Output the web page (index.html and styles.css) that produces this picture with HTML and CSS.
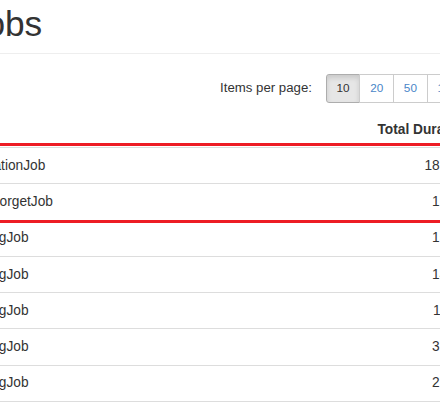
FILE: index.html
```html
<!DOCTYPE html>
<html lang="en">
<head>
<meta charset="utf-8">
<title>Succeeded Jobs</title>
<link rel="stylesheet" href="styles.css">
</head>
<body>
<div class="page">
  <h1 class="page-header">Succeeded Jobs</h1>
  <div class="toolbar">
    <button class="btn btn-sm" disabled>Requeue jobs</button>
    <div class="per-page">
      <span class="per-page-label">Items per page:</span>
      <div class="btn-group">
        <a class="btn btn-sm active">10</a>
        <a class="btn btn-sm">20</a>
        <a class="btn btn-sm">50</a>
        <a class="btn btn-sm">100</a>
        <a class="btn btn-sm">500</a>
        <a class="btn btn-sm">1000</a>
        <a class="btn btn-sm">5000</a>
      </div>
    </div>
  </div>
  <div class="table-wrap">
    <table class="table">
      <colgroup>
        <col class="c-check">
        <col class="c-id">
        <col class="c-job">
        <col class="c-dur">
        <col class="c-when">
      </colgroup>
      <thead>
        <tr>
          <th><input type="checkbox"></th>
          <th>Id</th>
          <th>Job</th>
          <th class="right">Total Duration</th>
          <th class="right">Succeeded</th>
        </tr>
      </thead>
      <tbody>
        <tr><td><input type="checkbox"></td><td>#1057</td><td>AuthorizationJob</td><td class="right">183 ms</td><td class="right">a minute ago</td></tr>
        <tr><td><input type="checkbox"></td><td>#1056</td><td>FireAndForgetJob</td><td class="right">12 ms</td><td class="right">a minute ago</td></tr>
        <tr><td><input type="checkbox"></td><td>#1055</td><td>PublishingJob</td><td class="right">15 ms</td><td class="right">2 minutes ago</td></tr>
        <tr><td><input type="checkbox"></td><td>#1054</td><td>PublishingJob</td><td class="right">14 ms</td><td class="right">3 minutes ago</td></tr>
        <tr><td><input type="checkbox"></td><td>#1053</td><td>PublishingJob</td><td class="right">11 ms</td><td class="right">4 minutes ago</td></tr>
        <tr><td><input type="checkbox"></td><td>#1052</td><td>PublishingJob</td><td class="right">31 ms</td><td class="right">5 minutes ago</td></tr>
        <tr><td><input type="checkbox"></td><td>#1051</td><td>PublishingJob</td><td class="right">27 ms</td><td class="right">6 minutes ago</td></tr>
        <tr><td><input type="checkbox"></td><td>#1050</td><td>PublishingJob</td><td class="right">19 ms</td><td class="right">7 minutes ago</td></tr>
        <tr><td><input type="checkbox"></td><td>#1049</td><td>PublishingJob</td><td class="right">16 ms</td><td class="right">8 minutes ago</td></tr>
        <tr><td><input type="checkbox"></td><td>#1048</td><td>PublishingJob</td><td class="right">13 ms</td><td class="right">9 minutes ago</td></tr>
      </tbody>
    </table>
    <div class="highlight"></div>
  </div>
</div>
</body>
</html>
```
FILE: styles.css
```css
html {
  zoom: 0.98;
}

* {
  box-sizing: border-box;
}

body {
  margin: 0;
  overflow: hidden;
  background: #fff;
  color: #333;
  font-family: "Liberation Sans", Arial, sans-serif;
  font-size: 14px;
  line-height: 20px;
}

.page {
  width: 832px;
  margin-left: -218px;
}

.page-header {
  margin: 5.5px 0 20px;
  padding-bottom: 9px;
  border-bottom: 1px solid #eee;
  font-size: 36px;
  line-height: 39.6px;
  font-weight: 500;
  text-indent: -5px;
}

.toolbar {
  display: flex;
  justify-content: space-between;
  align-items: center;
  height: 30px;
  margin-bottom: 9px;
}

.per-page {
  display: flex;
  align-items: center;
}

.per-page-label {
  margin-right: 14px;
  font-size: 13.5px;
}

.btn-group {
  display: flex;
}

.btn {
  display: inline-block;
  padding: 5px 10px;
  font-family: inherit;
  font-size: 12px;
  line-height: 18px;
  border: 1px solid #ccc;
  background: #fff;
  color: #4a86c8;
  text-decoration: none;
  border-radius: 3px;
}

.btn[disabled] {
  color: #333;
  opacity: 0.65;
}

.btn-group .btn {
  border-radius: 0;
}

.btn-group .btn + .btn {
  margin-left: -1px;
}

.btn-group .btn:first-child {
  border-radius: 3px 0 0 3px;
}

.btn-group .btn:last-child {
  border-radius: 0 3px 3px 0;
}

.btn.active {
  background: #e6e6e6;
  border-color: #adadad;
  color: #333;
  box-shadow: inset 0 3px 5px rgba(0, 0, 0, 0.125);
}

.table-wrap {
  position: relative;
}

.table {
  width: 100%;
  table-layout: fixed;
  border-collapse: separate;
  border-spacing: 0;
}

.c-check { width: 30px; }
.c-id { width: 122px; }
.c-job { width: 400px; }
.c-dur { width: 153px; }

.table th,
.table td {
  padding: 8px;
  line-height: 20px;
  text-align: left;
  white-space: nowrap;
  overflow: hidden;
}

.table th {
  font-weight: bold;
  vertical-align: bottom;
  border-bottom: 2px solid #ddd;
}

.table td {
  vertical-align: top;
  border-top: 1px solid #ddd;
}

.table tbody tr:first-child td {
  border-top: 0;
}

.table .right {
  text-align: right;
}

.table input {
  margin: 0;
}

.highlight {
  position: absolute;
  top: 32px;
  left: 0;
  right: 0;
  height: 81.5px;
  border: 4px solid #ed1c24;
  pointer-events: none;
}
```
